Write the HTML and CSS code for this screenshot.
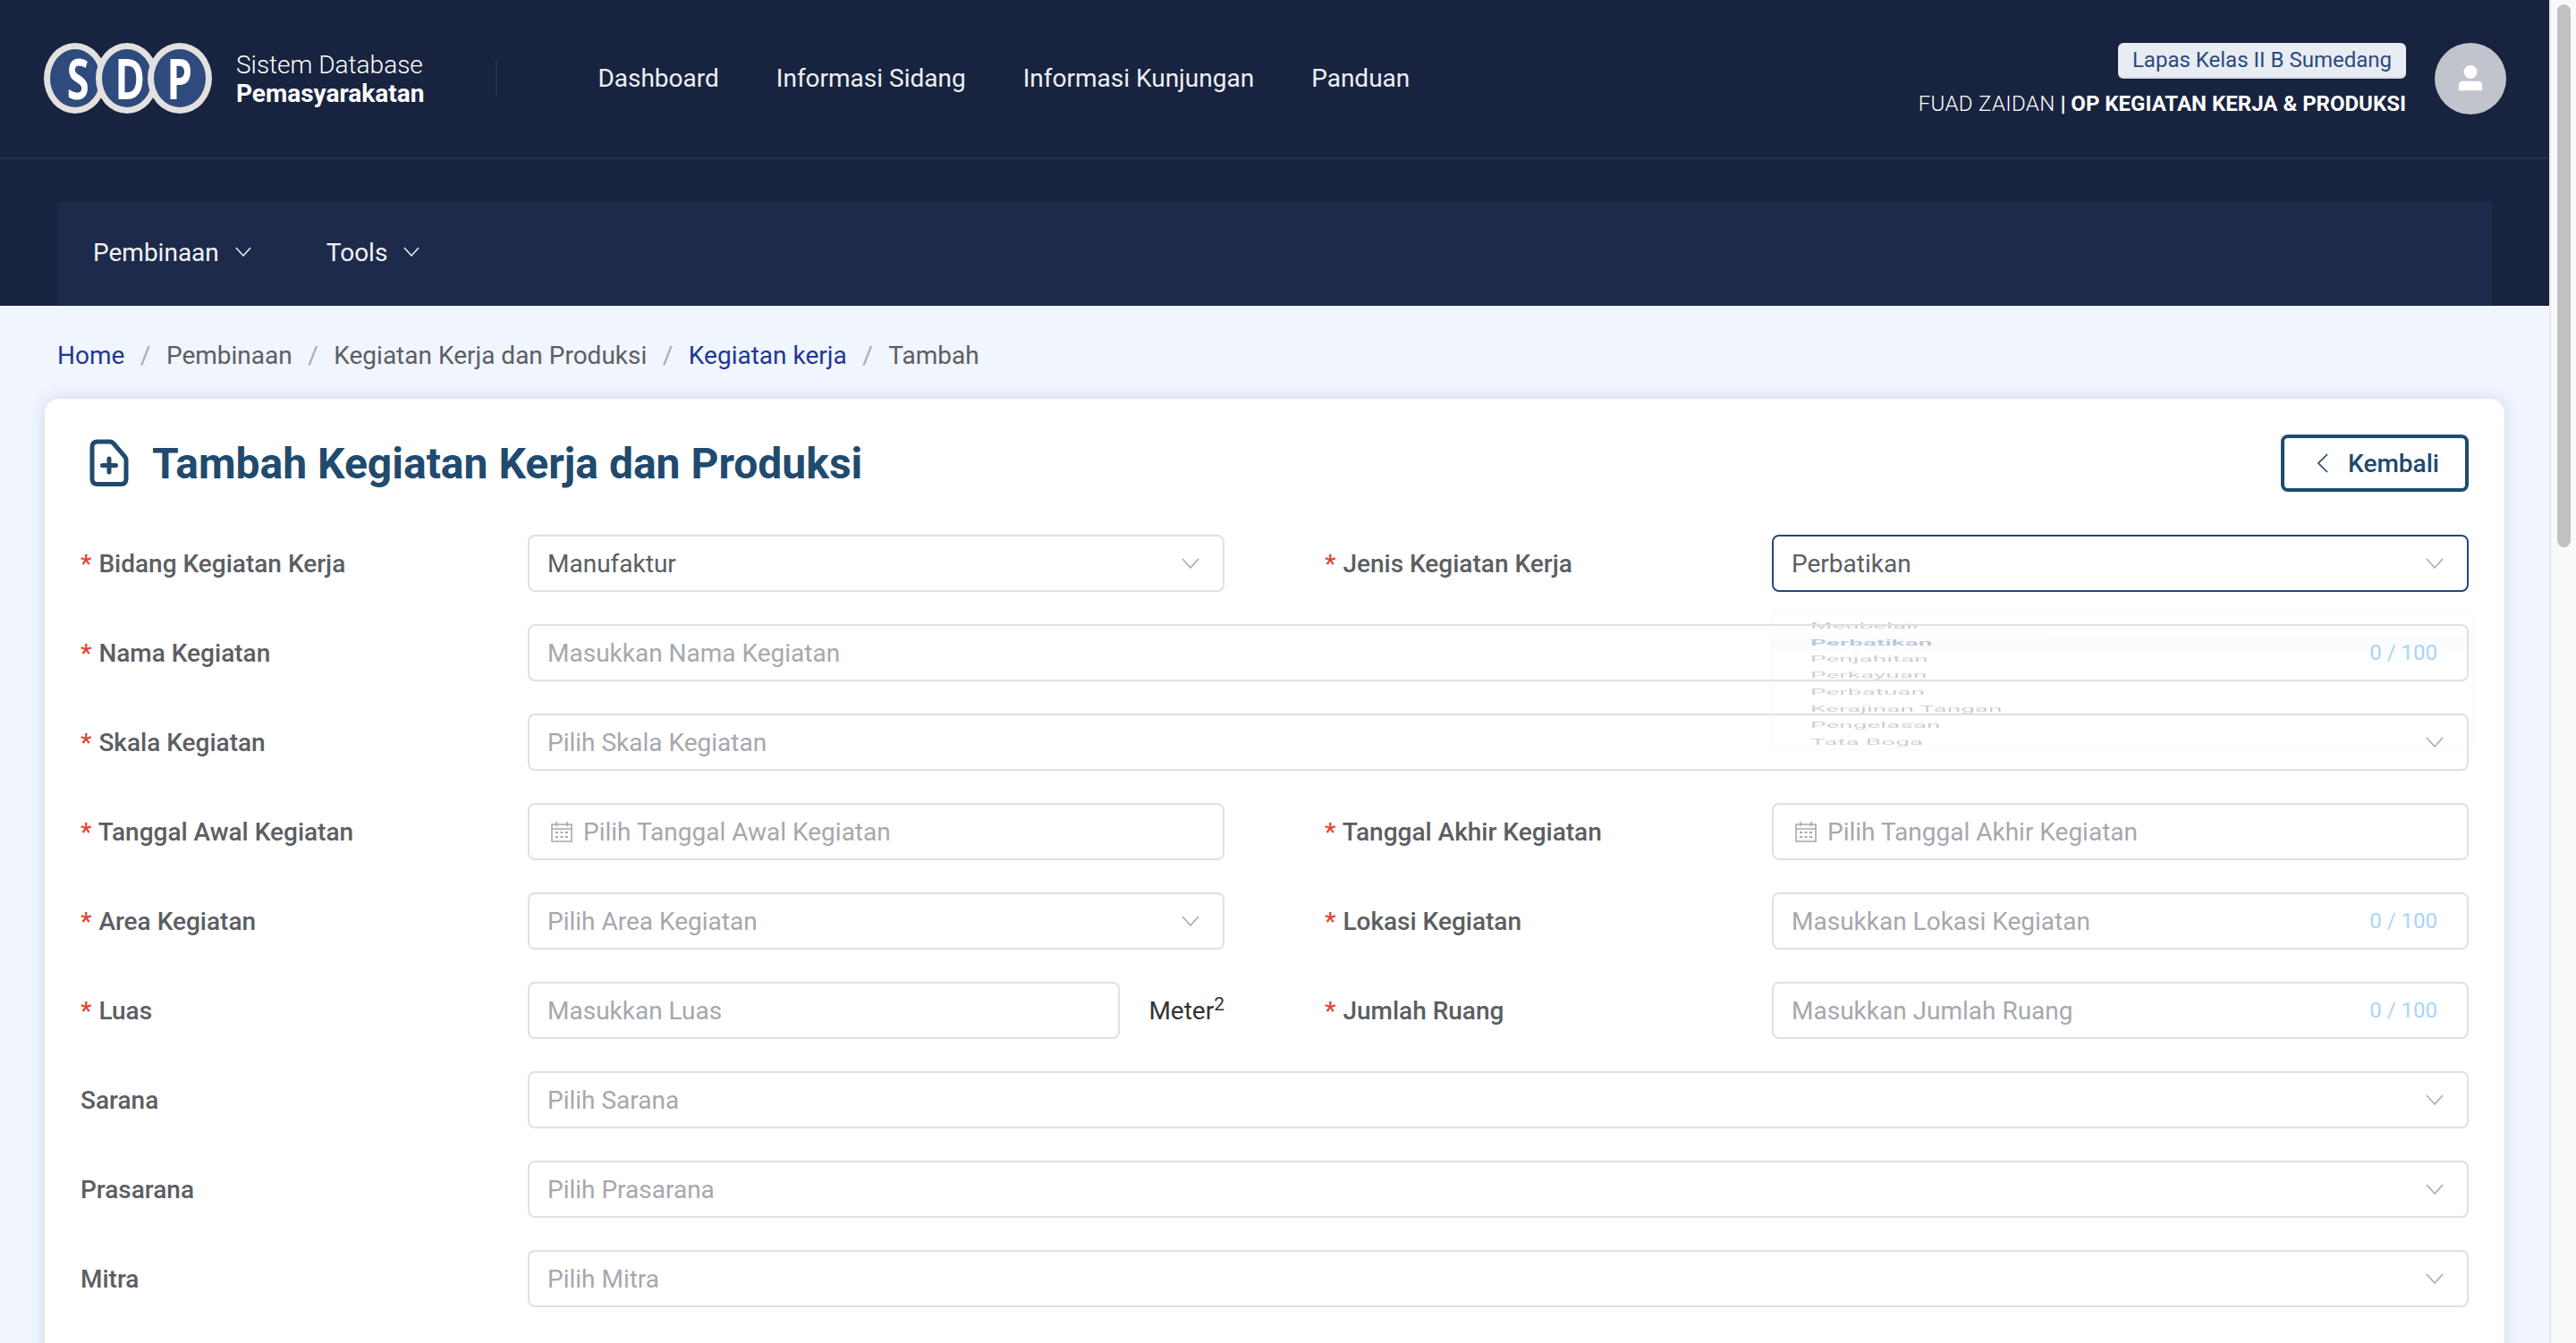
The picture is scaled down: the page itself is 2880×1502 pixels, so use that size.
FILE: index.html
```html
<!DOCTYPE html>
<html lang="id">
<head>
  <meta charset="UTF-8">
  <meta name="viewport" content="width=device-width, initial-scale=1">
  <title>Tambah Kegiatan Kerja dan Produksi</title>
  <link rel="stylesheet" href="styles.css">
</head>
<body>

<svg class="defs" width="0" height="0">
  <symbol id="chev" viewBox="0 0 20 12"><path d="M1 1l9 10 9-10" fill="none" stroke="currentColor" stroke-width="1.6"/></symbol>
  <symbol id="cal" viewBox="0 0 24 24">
    <path d="M1 4h22v19H1zM1 9h22M6 1v5M18 1v5" fill="none" stroke="currentColor" stroke-width="1.6"/>
    <path d="M5 13h3M10.500 13h3M16 13h3M5 18h3M10.500 18h3M16 18h3" fill="none" stroke="currentColor" stroke-width="2"/>
  </symbol>
</svg>

<div class="app">
  <div class="main">

    <header class="header">
      <div class="topbar">
        <div class="logo">
          <div class="ring"><span>S</span></div>
          <div class="ring"><span>D</span></div>
          <div class="ring"><span>P</span></div>
        </div>
        <div class="brand">
          <span class="brand-light">Sistem Database</span>
          <span class="brand-bold">Pemasyarakatan</span>
        </div>
        <div class="divider"></div>
        <nav class="nav">
          <a>Dashboard</a>
          <a>Informasi Sidang</a>
          <a>Informasi Kunjungan</a>
          <a>Panduan</a>
        </nav>
        <div class="user">
          <div class="user-info">
            <span class="badge">Lapas Kelas II B Sumedang</span>
            <span class="user-name"><span class="user-light">FUAD ZAIDAN</span> <b class="pipe">|</b> <b>OP KEGIATAN KERJA &amp; PRODUKSI</b></span>
          </div>
          <div class="avatar">
            <svg viewBox="0 0 28 32" width="28" height="30"><circle cx="14" cy="8" r="8" fill="#fff"/><path d="M0 30v-6q0-5 5-5h18q5 0 5 5v6z" fill="#fff"/></svg>
          </div>
        </div>
      </div>
      <div class="subnav">
        <a>Pembinaan <svg class="sub-chev" width="18" height="11"><use href="#chev"/></svg></a>
        <a>Tools <svg class="sub-chev" width="18" height="11"><use href="#chev"/></svg></a>
      </div>
    </header>

    <div class="crumbs">
      <a class="link">Home</a><i>/</i>
      <span>Pembinaan</span><i>/</i>
      <span>Kegiatan Kerja dan Produksi</span><i>/</i>
      <a class="link">Kegiatan kerja</a><i>/</i>
      <span>Tambah</span>
    </div>

    <section class="card">
      <div class="card-head">
        <h1>
          <svg width="44" height="54" viewBox="0 0 44 54" fill="none" stroke="#204a6e" stroke-width="5">
            <path d="M9 3h14q2 0 3.500 1.500l13 15q1.500 2 1.500 4v21q0 6-6 6H9q-6 0-6-6V9q0-6 6-6z"/>
            <path d="M22 22v15M14.500 29.500h15" stroke-linecap="round"/>
          </svg>
          Tambah Kegiatan Kerja dan Produksi
        </h1>
        <button class="btn-back">
          <svg width="12" height="22" viewBox="0 0 12 22"><path d="M11 1L1 11l10 10" fill="none" stroke="currentColor" stroke-width="1.600"/></svg>
          Kembali
        </button>
      </div>

      <div class="form">
        <div class="field">
          <label><em>*</em> Bidang Kegiatan Kerja</label>
          <div class="control value">Manufaktur<svg class="chev"><use href="#chev"/></svg></div>
        </div>
        <div class="field jenis">
          <label><em>*</em> Jenis Kegiatan Kerja</label>
          <div class="control value focus">Perbatikan<svg class="chev"><use href="#chev"/></svg>
            <div class="dropdown">
              <ul>
                <li>Meubelair</li>
                <li class="active">Perbatikan</li>
                <li>Penjahitan</li>
                <li>Perkayuan</li>
                <li>Perbatuan</li>
                <li>Kerajinan Tangan</li>
                <li>Pengelasan</li>
                <li>Tata Boga</li>
              </ul>
            </div>
          </div>
        </div>

        <div class="field wide">
          <label><em>*</em> Nama Kegiatan</label>
          <div class="control">Masukkan Nama Kegiatan<span class="count">0 / 100</span></div>
        </div>
        <div class="field wide">
          <label><em>*</em> Skala Kegiatan</label>
          <div class="control">Pilih Skala Kegiatan<svg class="chev"><use href="#chev"/></svg></div>
        </div>

        <div class="field">
          <label><em>*</em> Tanggal Awal Kegiatan</label>
          <div class="control"><svg class="cal"><use href="#cal"/></svg>Pilih Tanggal Awal Kegiatan</div>
        </div>
        <div class="field">
          <label><em>*</em> Tanggal Akhir Kegiatan</label>
          <div class="control"><svg class="cal"><use href="#cal"/></svg>Pilih Tanggal Akhir Kegiatan</div>
        </div>

        <div class="field">
          <label><em>*</em> Area Kegiatan</label>
          <div class="control">Pilih Area Kegiatan<svg class="chev"><use href="#chev"/></svg></div>
        </div>
        <div class="field">
          <label><em>*</em> Lokasi Kegiatan</label>
          <div class="control">Masukkan Lokasi Kegiatan<span class="count">0 / 100</span></div>
        </div>

        <div class="field">
          <label><em>*</em> Luas</label>
          <div class="luas">
            <div class="control">Masukkan Luas</div>
            <span class="unit">Meter<sup>2</sup></span>
          </div>
        </div>
        <div class="field">
          <label><em>*</em> Jumlah Ruang</label>
          <div class="control">Masukkan Jumlah Ruang<span class="count">0 / 100</span></div>
        </div>

        <div class="field wide">
          <label>Sarana</label>
          <div class="control">Pilih Sarana<svg class="chev"><use href="#chev"/></svg></div>
        </div>
        <div class="field wide">
          <label>Prasarana</label>
          <div class="control">Pilih Prasarana<svg class="chev"><use href="#chev"/></svg></div>
        </div>
        <div class="field wide">
          <label>Mitra</label>
          <div class="control">Pilih Mitra<svg class="chev"><use href="#chev"/></svg></div>
        </div>
      </div>
    </section>
  </div>

  <div class="scrollbar"><div class="thumb"></div></div>
</div>

</body>
</html>
```

FILE: styles.css
```css
* {
  box-sizing: border-box;
}

html, body {
  margin: 0;
  height: 1502px;
  overflow: hidden;
}

body {
  font-family: Roboto, "Liberation Sans", sans-serif;
  font-size: 28px;
  color: #5c5e63;
  background: #f0f5fe;
}

.defs {
  position: absolute;
}

.app {
  display: flex;
  height: 1502px;
}

.main {
  flex: 1;
  min-width: 0;
}

/* header */
.header {
  background: #18233f;
  color: #fff;
  height: 342px;
}

.topbar {
  display: flex;
  align-items: center;
  height: 178px;
  padding: 0 48px 2px 49px;
  border-bottom: 2px solid #253150;
}

.logo {
  flex: none;
  display: flex;
  width: 188px;
  filter: blur(.5px);
}

.ring {
  width: 70px;
  height: 79px;
  margin-right: -12px;
  border: 7px solid #e3e1df;
  border-radius: 50%;
  background: #2f4a7c;
  display: flex;
  align-items: center;
  justify-content: center;
  font-family: "Open Sans", sans-serif;
  font-weight: 700;
  font-size: 63px;
  line-height: 60px;
  color: #fff;
}

.ring:last-child {
  width: 72px;
  margin-right: 0;
}

.ring span {
  margin-left: 6px;
  transform: scaleX(.72);
}

.ring:last-child span {
  margin-left: 0;
}

.brand {
  display: flex;
  flex-direction: column;
  margin: 4px 0 0 27px;
  line-height: 32px;
}

.brand-light {
  font-weight: 300;
}

.brand-bold {
  font-weight: 700;
}

.divider {
  width: 2px;
  height: 40px;
  background: #253150;
  margin: 0 112px 0 80px;
}

.nav {
  display: flex;
  gap: 64px;
  color: #eef0f4;
}

.user {
  display: flex;
  align-items: center;
  margin: 2px 0 0 auto;
  gap: 32px;
}

.user-info {
  display: flex;
  flex-direction: column;
  align-items: flex-end;
  gap: 14px;
  margin-top: 2px;
}

.badge {
  background: #e9ecf2;
  color: #2b4a80;
  font-size: 24px;
  line-height: 38px;
  padding: 0 16px;
  border-radius: 6px;
  border-bottom: 2px solid #d3d8e3;
}

.user-name {
  font-size: 24px;
  font-weight: 300;
  line-height: 28px;
  white-space: nowrap;
}

.user-light {
  letter-spacing: .35px;
}

.user-name b {
  font-weight: 700;
}

.avatar {
  width: 80px;
  height: 80px;
  border-radius: 50%;
  background: #c1c4cc;
  display: flex;
  align-items: center;
  justify-content: center;
}

.subnav {
  display: flex;
  align-items: center;
  gap: 84px;
  height: 116px;
  margin: 48px 64px 0;
  padding: 0 0 4px 40px;
  background: #1e2a4b;
  color: #f2f3f6;
}

.subnav a {
  display: flex;
  align-items: center;
  gap: 18px;
}

.sub-chev {
  margin-top: -2px;
}

/* breadcrumb */
.crumbs {
  display: flex;
  align-items: center;
  height: 104px;
  padding: 6px 0 0 64px;
  white-space: nowrap;
}

.crumbs i {
  font-style: normal;
  color: #a9abb0;
  margin: 0 17.500px;
}

.link {
  color: #1f3796;
}

/* card */
.card {
  margin: 0 50px;
  padding: 40px 40px 0;
  height: 1200px;
  background: #fff;
  border-radius: 16px;
  box-shadow: 0 0 18px rgba(50, 70, 130, .16);
}

.card-head {
  display: flex;
  justify-content: space-between;
  align-items: center;
  height: 64px;
  margin-bottom: 48px;
}

h1 {
  display: flex;
  align-items: center;
  gap: 26px;
  margin: 0 0 0 10px;
  font-size: 48px;
  font-weight: 700;
  color: #204a6e;
  white-space: nowrap;
}

.btn-back {
  display: flex;
  align-items: center;
  justify-content: center;
  gap: 22px;
  width: 210px;
  height: 64px;
  padding: 0 0 0 8px;
  background: #fff;
  border: 4px solid #204a6e;
  border-radius: 8px;
  color: #204a6e;
  font: 500 28px Roboto, sans-serif;
}

/* form */
.form {
  display: grid;
  grid-template-columns: 1fr 1fr;
  column-gap: 112px;
  row-gap: 36px;
}

.field {
  display: flex;
  align-items: center;
  min-width: 0;
}

.wide {
  grid-column: 1 / 3;
}

label {
  flex: none;
  width: 500px;
  font-weight: 500;
}

label em {
  font-style: normal;
  color: #e4432d;
  margin-right: 1px;
}

.control {
  flex: 1;
  position: relative;
  display: flex;
  align-items: center;
  height: 64px;
  padding: 0 20px;
  border: 2px solid #dfe0e6;
  border-radius: 8px;
  color: #a6a8ae;
  white-space: nowrap;
}

.value {
  color: #5c5e63;
}

.focus {
  border-color: #26477c;
}

.chev {
  width: 20px;
  height: 12px;
  margin-left: auto;
  margin-right: 6px;
  color: #aaabb0;
}

.cal {
  width: 24px;
  height: 24px;
  margin: 0 12px 0 4px;
  color: #a6a8ae;
}

.count {
  margin-left: auto;
  margin-right: 13px;
  font-size: 24px;
  color: #a9d4fa;
}

.luas {
  flex: 1;
  display: flex;
  align-items: center;
  justify-content: space-between;
}

.luas .control {
  flex: none;
  width: 662px;
}

.unit {
  color: #333;
}

.unit sup {
  font-size: 21px;
  line-height: 0;
}

/* dropdown while it is opening */
.dropdown {
  position: absolute;
  top: 87px;
  left: -1px;
  width: 782px;
  height: 150px;
  background: rgba(255, 255, 255, .55);
  border-radius: 6px;
  box-shadow: 0 0 6px rgba(40, 50, 90, .05);
  overflow: hidden;
}

.dropdown ul {
  list-style: none;
  margin: 0;
  padding: 13px 0 0;
  transform: scaleY(.3);
  transform-origin: top;
  opacity: .3;
  color: #5c5e63;
}

.dropdown li {
  height: 61.800px;
  line-height: 61.800px;
  padding-left: 42px;
}

.dropdown .active {
  background: #f3f6fd;
  color: #26477c;
  font-weight: 700;
}

/* scrollbar */
.scrollbar {
  flex: none;
  width: 30px;
  padding: 5px 6px 0 7px;
  background: #fafafa;
  border-left: 2px solid #e8e8e8;
}

.thumb {
  height: 607px;
  background: #c1c1c1;
  border-radius: 8px;
}
```
